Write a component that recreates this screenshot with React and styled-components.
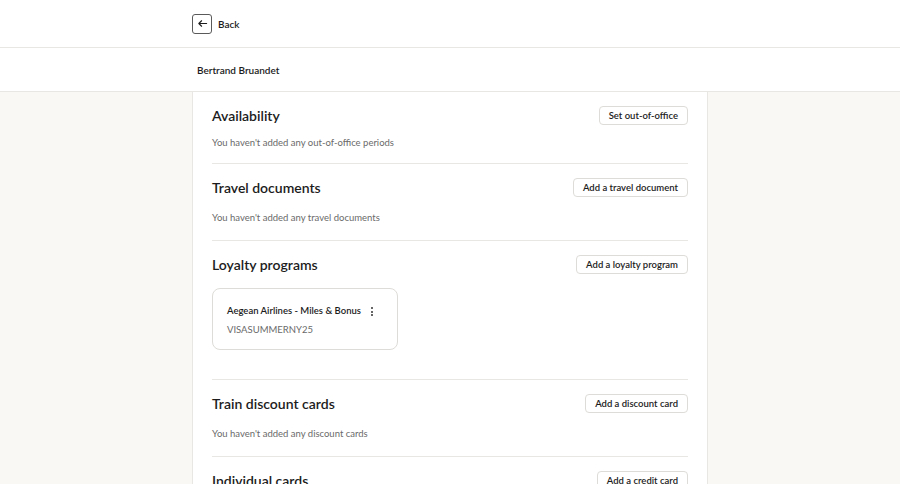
import React from 'react';
import styled, { createGlobalStyle } from 'styled-components';

const GlobalStyle = createGlobalStyle`
  html, body {
    margin: 0;
    padding: 0;
    background: #f9f8f5;
    font-family: Lato, "Liberation Sans", sans-serif;
    color: #1c1c1c;
  }
  * { box-sizing: border-box; }
`;

const TopBar = styled.header`
  height: 48px;
  background: #fff;
  border-bottom: 1px solid #e8e7e3;
`;

const Inner = styled.div`
  width: 516px;
  margin: 0 auto;
  height: 100%;
  display: flex;
  align-items: center;
`;

const BackButton = styled.button`
  display: flex;
  align-items: center;
  gap: 6px;
  padding: 0;
  border: 0;
  background: none;
  font: inherit;
  font-size: 10px;
  font-weight: 600;
  color: #1c1c1c;
  cursor: pointer;
`;

const IconBox = styled.span`
  width: 20px;
  height: 20px;
  border: 1px solid #5a5a5a;
  border-radius: 3px;
  display: flex;
  align-items: center;
  justify-content: center;
`;

const NameBar = styled.div`
  height: 44px;
  background: #fff;
  border-bottom: 1px solid #e8e7e3;
`;

const Name = styled.span`
  padding-left: 5px;
  font-size: 10px;
  font-weight: 600;
`;

const Panel = styled.main`
  width: 516px;
  margin: 0 auto;
  background: #fff;
  border-left: 1px solid #e8e7e3;
  border-right: 1px solid #e8e7e3;
  padding: 0 19px;
  min-height: 400px;
`;

const Section = styled.section`
  padding: 14px 0 ${p => p.$bottom}px;
  border-bottom: 1px solid #e8e7e3;
`;

const SectionHead = styled.div`
  display: flex;
  align-items: center;
  justify-content: space-between;
`;

const Title = styled.h2`
  margin: 0;
  font-size: 14px;
  font-weight: 600;
  color: #1c1c1c;
`;

const OutlineButton = styled.button`
  height: 19px;
  padding: 0 9px;
  background: #fff;
  border: 1px solid #dddcd8;
  border-radius: 4px;
  font: inherit;
  font-size: 9.5px;
  font-weight: 600;
  color: #1c1c1c;
`;

const Empty = styled.p`
  margin: ${p => p.$gap}px 0 0;
  font-size: 9.5px;
  line-height: 14px;
  color: #6a6a6a;
`;

const CardGrid = styled.div`
  margin-top: 14px;
  display: flex;
`;

const Card = styled.div`
  width: 186px;
  height: 62px;
  border: 1px solid #dddcd8;
  border-radius: 8px;
  padding: 15px 14px 0;
`;

const CardTop = styled.div`
  display: flex;
  align-items: center;
  justify-content: space-between;
`;

const CardTitle = styled.div`
  font-size: 9.5px;
  font-weight: 600;
  color: #1c1c1c;
`;

const CardCode = styled.div`
  margin-top: 8px;
  font-size: 9.5px;
  color: #6a6a6a;
`;

const Kebab = styled.span`
  display: flex;
  flex-direction: column;
  gap: 1.5px;
  margin: 3px 10px 0 0;
  span {
    width: 2px;
    height: 2px;
    border-radius: 50%;
    background: #333;
  }
`;

const sections = [
  { title: 'Availability', action: 'Set out-of-office', empty: "You haven't added any out-of-office periods", gap: 11, bottom: 13 },
  { title: 'Travel documents', action: 'Add a travel document', empty: "You haven't added any travel documents", gap: 14, bottom: 15 },
  { title: 'Loyalty programs', action: 'Add a loyalty program', bottom: 29, cards: [{ name: 'Aegean Airlines - Miles & Bonus', code: 'VISASUMMERNY25' }] },
  { title: 'Train discount cards', action: 'Add a discount card', empty: "You haven't added any discount cards", gap: 14, bottom: 15 },
  { title: 'Individual cards', action: 'Add a credit card', empty: "You haven't added any credit cards", gap: 14, bottom: 15 },
];

export default function App() {
  return (
    <>
      <GlobalStyle />
      <TopBar>
        <Inner>
          <BackButton>
            <IconBox>
              <svg width="11" height="11" viewBox="0 0 24 24" fill="none" stroke="#1c1c1c" strokeWidth="2.4" strokeLinecap="round" strokeLinejoin="round">
                <path d="M21 12H4M10 6l-6 6 6 6" />
              </svg>
            </IconBox>
            Back
          </BackButton>
        </Inner>
      </TopBar>
      <NameBar>
        <Inner>
          <Name>Bertrand Bruandet</Name>
        </Inner>
      </NameBar>
      <Panel>
        {sections.map(s => (
          <Section key={s.title} $bottom={s.bottom}>
            <SectionHead>
              <Title>{s.title}</Title>
              <OutlineButton>{s.action}</OutlineButton>
            </SectionHead>
            {s.empty && <Empty $gap={s.gap}>{s.empty}</Empty>}
            {s.cards && (
              <CardGrid>
                {s.cards.map(c => (
                  <Card key={c.name}>
                    <CardTop>
                      <CardTitle>{c.name}</CardTitle>
                      <Kebab><span /><span /><span /></Kebab>
                    </CardTop>
                    <CardCode>{c.code}</CardCode>
                  </Card>
                ))}
              </CardGrid>
            )}
          </Section>
        ))}
      </Panel>
    </>
  );
}
